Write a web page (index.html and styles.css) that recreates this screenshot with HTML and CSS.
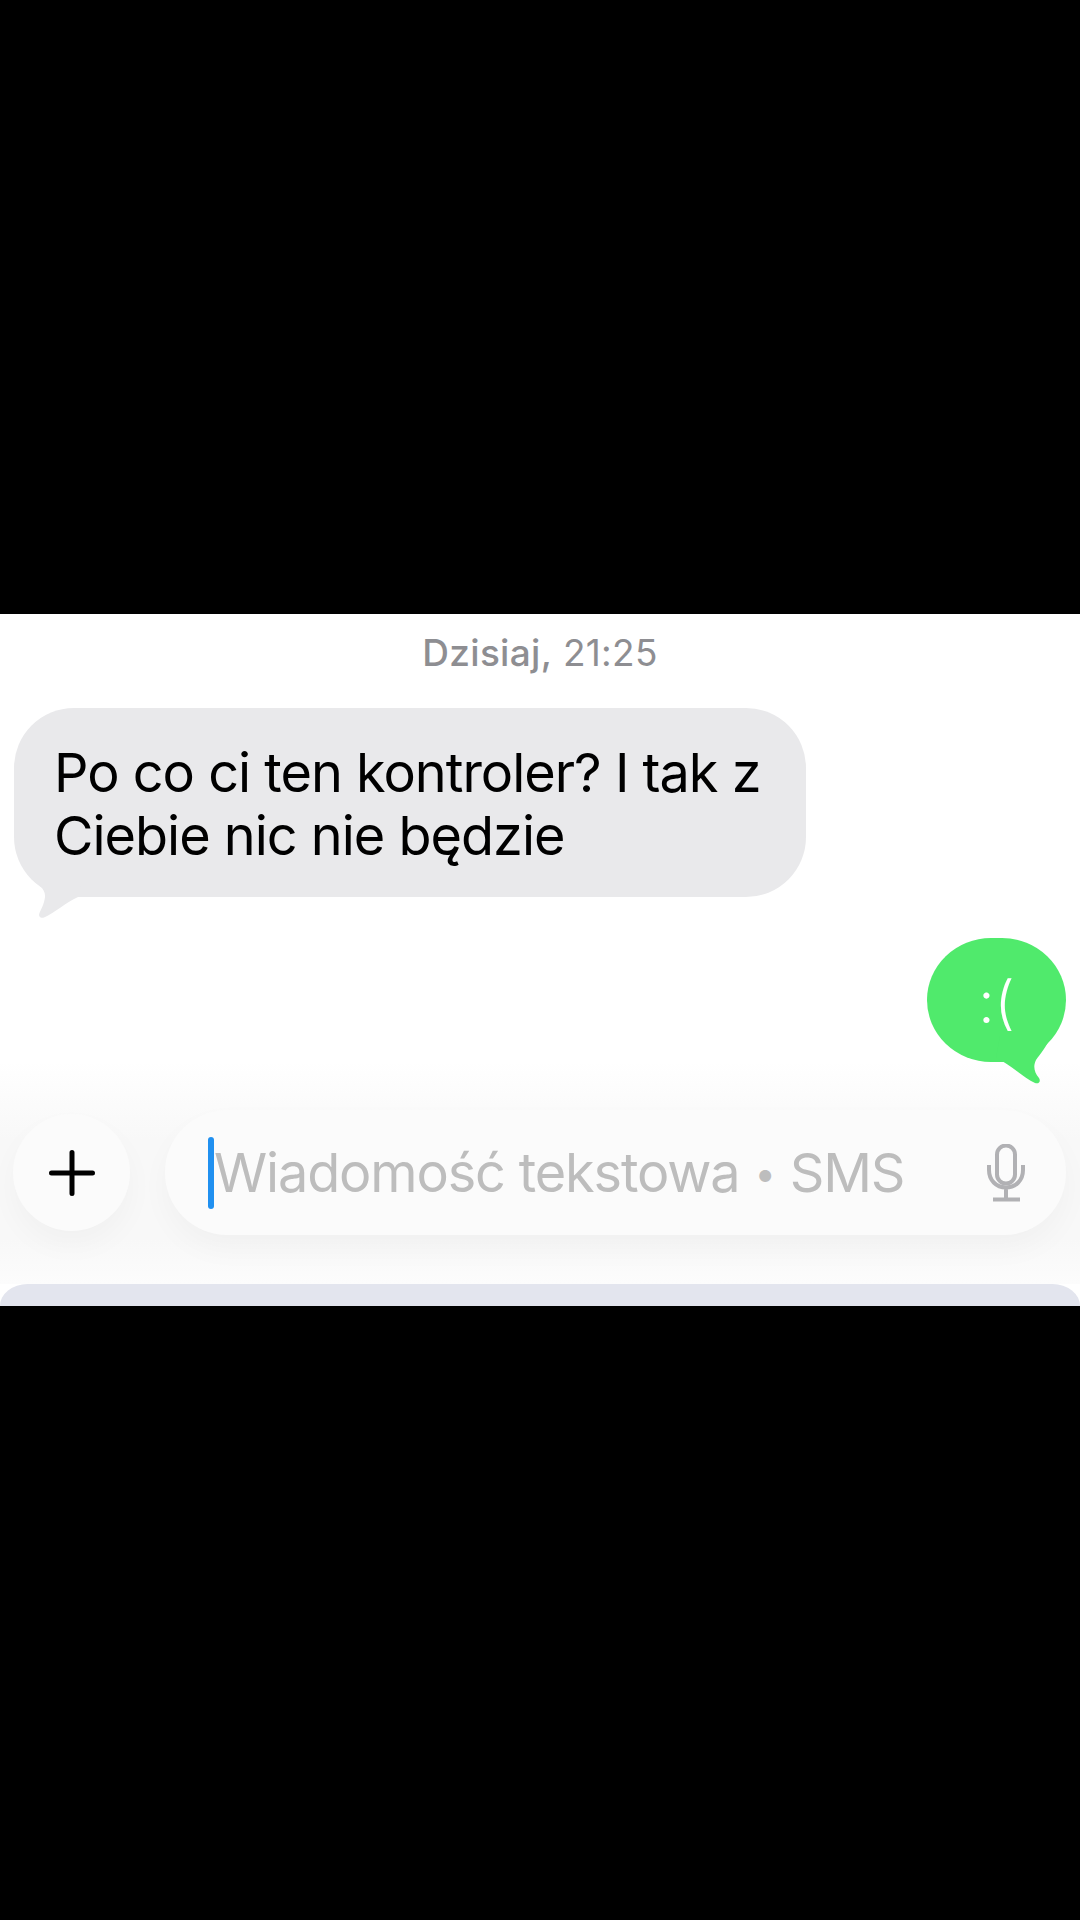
FILE: index.html
```html
<!DOCTYPE html>
<html lang="pl">
<head>
    <meta charset="UTF-8">
    <meta name="viewport" content="width=device-width, initial-scale=1.0">
    <title>Wiadomości</title>
    <link rel="stylesheet" href="styles.css">
</head>
<body>
    <div class="screen">
        <div class="stamp"><b>Dzisiaj,</b> 21:25</div>

        <div class="thread">
            <div class="bubble bubble-in">
                Po co ci ten kontroler? I tak z<br>Ciebie nic nie będzie
                <svg class="tail tail-in" width="70" height="50" viewBox="20 870 70 50">
                    <path d="M30 872 C36 884 46 888 45 897 C44 905 41 909 39.500 913 C38 917 41 918.500 44 917.500 C55 913 66 902 78 897 L84 872 Z"/>
                </svg>
            </div>
            <div class="bubble bubble-out">
                <span class="smile">:(</span>
                <svg class="tail tail-out" width="70" height="52" viewBox="990 1035 70 52">
                    <path d="M996 1058 C1010 1064 1024 1078 1035 1083 C1039 1084.500 1041 1081 1039 1078 C1034 1072 1033 1066 1036 1060 C1040 1054 1046 1048 1051 1036 L1000 1036 Z"/>
                </svg>
            </div>
        </div>

        <div class="composer">
            <div class="plus-btn">
                <svg width="46" height="46" viewBox="0 0 46 46">
                    <path d="M23 2.500V43.500M2.500 23H43.500"/>
                </svg>
            </div>
            <div class="input-pill">
                <span class="caret"></span>
                <span class="placeholder">Wiadomość tekstowa <span class="dot">•</span> SMS</span>
                <svg class="mic" width="38" height="58" viewBox="0 0 38 58">
                    <rect x="10" y="1.500" width="18" height="38" rx="9"/>
                    <path d="M2 21V26C2 36 9 43.500 19 43.500C29 43.500 36 36 36 26V21M19 43.500V55M6 55.500H33"/>
                </svg>
            </div>
        </div>

        <div class="keyboard"></div>
    </div>
</body>
</html>
```

FILE: styles.css
```css
body {
    margin: 0;
    background: #000;
    font-family: Inter, "Liberation Sans", sans-serif;
}
.screen {
    margin-top: 614px;
    height: 692px;
    display: flex;
    flex-direction: column;
    background: #fff;
    overflow: hidden;
}
.stamp {
    height: 94px;
    padding-top: 18px;
    box-sizing: border-box;
    text-align: center;
    font-size: 37px;
    line-height: 42px;
    letter-spacing: 0.3px;
    color: #8e8e92;
}
.stamp b {
    font-weight: 500;
}
.thread {
    display: flex;
    flex-direction: column;
    padding: 0 14px;
}
.bubble {
    position: relative;
    box-sizing: border-box;
}
.bubble-in {
    width: 792px;
    height: 189px;
    padding: 33px 0 0 40px;
    border-radius: 60px;
    background: #e9e9eb;
    color: #000;
    font-size: 54px;
    line-height: 63px;
    letter-spacing: -1px;
}
.bubble-out {
    align-self: flex-end;
    width: 139px;
    height: 124px;
    margin-top: 41px;
    border-radius: 64px / 62px;
    background: #50ea6c;
    color: #fff;
    text-align: center;
}
.smile {
    font-size: 58px;
    font-weight: 300;
    line-height: 128px;
}
.tail {
    position: absolute;
}
.tail-in {
    left: 6px;
    top: 162px;
    fill: #e9e9eb;
}
.tail-out {
    left: 63px;
    top: 97px;
    fill: #50ea6c;
}
.composer {
    height: 222px;
    box-sizing: border-box;
    padding: 48px 14px 0 13px;
    display: flex;
    align-items: flex-start;
    gap: 35px;
    background: linear-gradient(#fff, #f8f8f8 35%, #f8f8f8 80%, #fcfcfc);
}
.plus-btn {
    flex: none;
    width: 117px;
    height: 117px;
    margin-top: 4px;
    display: flex;
    align-items: center;
    justify-content: center;
    border-radius: 50%;
    background: #fbfbfb;
    box-shadow: 0 14px 30px rgba(0, 0, 0, 0.03);
}
.plus-btn path {
    fill: none;
    stroke: #000;
    stroke-width: 5;
    stroke-linecap: round;
}
.input-pill {
    flex: 1;
    height: 125px;
    padding: 0 41px 0 43px;
    display: flex;
    align-items: center;
    border-radius: 62px;
    background: #fbfbfb;
    box-shadow: 0 14px 30px rgba(0, 0, 0, 0.03);
}
.caret {
    flex: none;
    width: 6px;
    height: 72px;
    border-radius: 3px;
    background: #2090f0;
}
.placeholder {
    flex: 1;
    font-size: 54px;
    letter-spacing: -1.15px;
    color: #bdbdbd;
    white-space: nowrap;
}
.dot {
    margin: 0 1px;
    font-size: 38px;
    vertical-align: 5px;
}
.mic {
    flex: none;
}
.mic rect, .mic path {
    fill: none;
    stroke: #b1b1b4;
    stroke-width: 4;
}
.keyboard {
    flex: 1;
    border-radius: 50px 50px 0 0 / 40px 40px 0 0;
    background: #e3e5ee;
}
```
